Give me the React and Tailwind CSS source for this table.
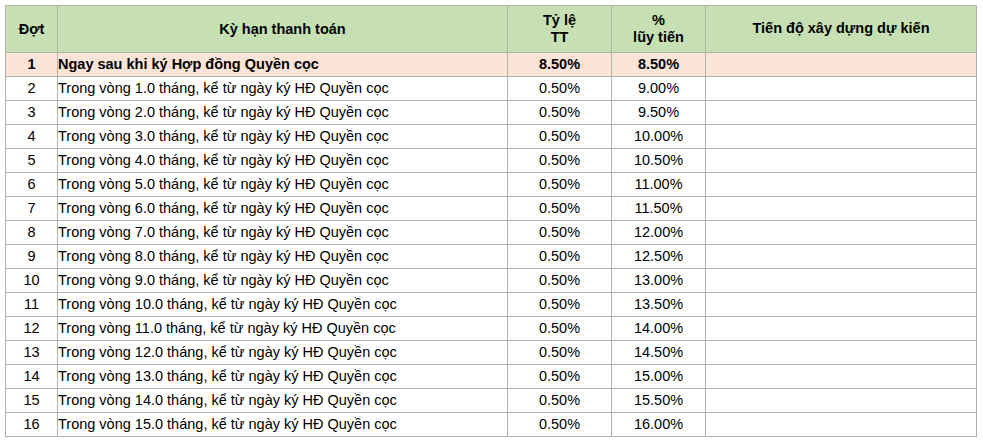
const rows = [
  { n: 1, term: 'Ngay sau khi ký Hợp đồng Quyền cọc', rate: '8.50%', acc: '8.50%', first: true },
  ...Array.from({ length: 15 }, (_, i) => ({
    n: i + 2,
    term: `Trong vòng ${i + 1}.0 tháng, kể từ ngày ký HĐ Quyền cọc`,
    rate: '0.50%',
    acc: `${(9 + i * 0.5).toFixed(2)}%`,
  })),
];

export default function App() {
  return (
    <div className="w-[983px] h-[440px] bg-white pl-[5px] pt-[5px]" style={{ fontFamily: '"Liberation Sans", Arial, sans-serif' }}>
      <table className="border-collapse text-[14.5px] text-black leading-none">
        <colgroup>
          <col className="w-[52px]" />
          <col className="w-[450px]" />
          <col className="w-[104px]" />
          <col className="w-[94px]" />
          <col className="w-[271px]" />
        </colgroup>
        <thead>
          <tr className="h-[47px] bg-[#c6e0b4] font-bold">
            <th className="border border-[#a9b8a0] text-center">Đợt</th>
            <th className="border border-[#a9b8a0] text-center">Kỳ hạn thanh toán</th>
            <th className="border border-[#a9b8a0] text-center leading-[17px]">Tỷ lệ<br />TT</th>
            <th className="border border-[#a9b8a0] text-center leading-[17px]">%<br />lũy tiến</th>
            <th className="border border-[#a9b8a0] text-center pb-[2px]">Tiến độ xây dựng dự kiến</th>
          </tr>
        </thead>
        <tbody>
          {rows.map((r) => (
            <tr key={r.n} className={`h-[24px] ${r.first ? 'bg-[#fce4d6] font-bold' : 'bg-white'}`}>
              <td className="border border-[#b0b0b0] text-center">{r.n}</td>
              <td className="border border-[#b0b0b0] text-left whitespace-nowrap">{r.term}</td>
              <td className="border border-[#b0b0b0] text-center">{r.rate}</td>
              <td className="border border-[#b0b0b0] text-center">{r.acc}</td>
              <td className="border border-[#b0b0b0]"></td>
            </tr>
          ))}
        </tbody>
      </table>
    </div>
  );
}
